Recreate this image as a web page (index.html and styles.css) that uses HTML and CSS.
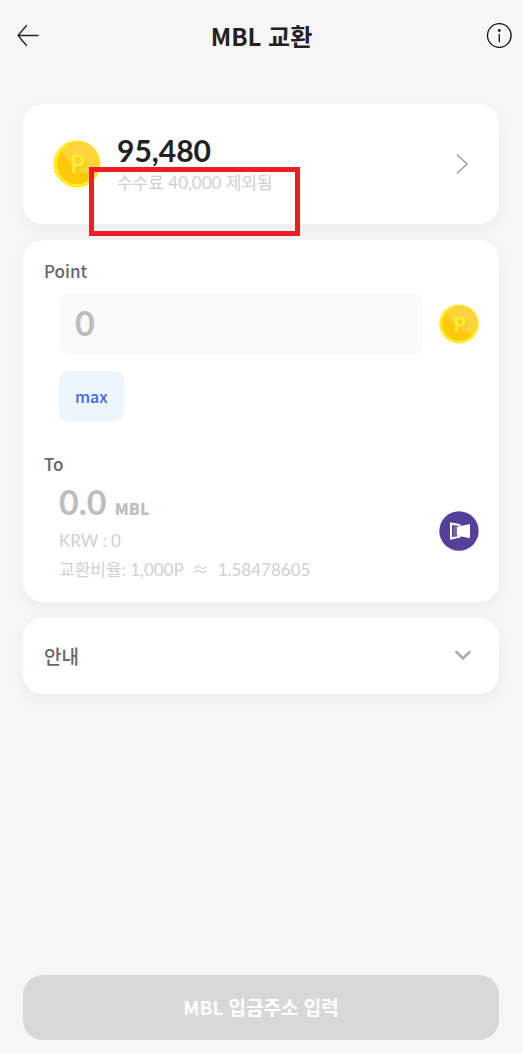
FILE: index.html
```html
<!DOCTYPE html>
<html lang="ko">
<head>
<meta charset="utf-8">
<meta name="viewport" content="width=device-width, initial-scale=1">
<title>MBL 교환</title>
<link rel="stylesheet" href="styles.css">
</head>
<body>
<div class="screen">
  <header class="bar">
    <button class="icon-button back" aria-label="뒤로">
      <svg width="24" height="24" viewBox="0 0 24 24" fill="none" stroke="#222" stroke-width="1.3" stroke-linecap="round" stroke-linejoin="round"><path d="M22 11.500H2M10.500 1.500L2 11.500l8.500 10"/></svg>
    </button>
    <h1 class="title">MBL 교환</h1>
    <button class="icon-button info" aria-label="정보">
      <svg width="26" height="26" viewBox="0 0 26 26" fill="none" stroke="#111" stroke-width="1.300" stroke-linecap="round"><circle cx="13.300" cy="12.500" r="11.800"/><path d="M13.300 11.500v7.200"/><circle cx="13.300" cy="7.500" r="1.400" fill="#111" stroke="none"/></svg>
    </button>
  </header>
  <main class="content">
    <section class="card balance">
      <svg class="coin-large" viewBox="0 0 48 48">
        <circle cx="24" cy="24" r="23.500" fill="#fbe21c"/>
        <circle cx="24" cy="24" r="22.500" fill="#fff02a"/>
        <circle cx="24" cy="24" r="20" fill="#ffc80a"/>
        <path d="M9 11A20 20 0 1 1 40 36Q19 31 9 11Z" fill="#ffd33a"/>
        <text x="25" y="33" class="coin-letter">P</text>
      </svg>
      <div class="balance-text">
        <strong class="amount">95,480</strong>
        <span class="note">수수료 40,000 제외됨</span>
      </div>
      <button class="icon-button" aria-label="상세">
        <svg width="14" height="22" viewBox="0 0 14 22" fill="none" stroke="#999" stroke-width="1.400"><path d="M2 1.500L12 11 2 20.500"/></svg>
      </button>
      <div class="highlight"></div>
    </section>
    <section class="card exchange">
      <label class="label" for="point">Point</label>
      <div class="row entry">
        <input id="point" class="point-input" type="text" inputmode="numeric" placeholder="0">
        <svg class="coin-small" viewBox="0 0 48 48">
          <circle cx="24" cy="24" r="23.500" fill="#fbe21c"/>
          <circle cx="24" cy="24" r="22.500" fill="#fff02a"/>
          <circle cx="24" cy="24" r="20" fill="#ffc80a"/>
          <path d="M9 11A20 20 0 1 1 40 36Q19 31 9 11Z" fill="#ffd33a"/>
          <text x="25" y="33" class="coin-letter">P</text>
        </svg>
      </div>
      <button class="max">max</button>
      <h2 class="label to">To</h2>
      <div class="row output">
        <div class="result">
          <p class="value">0.0 <span class="unit">MBL</span></p>
          <p class="note">KRW : 0</p>
          <p class="note">교환비율: 1,000P &nbsp;<span class="approx">≈</span>&nbsp; 1.58478605</p>
        </div>
        <svg class="token" viewBox="0 0 40 40"><circle cx="20" cy="20" r="19.700" fill="#563f98"/><path d="M11 11.300L21.500 13.300V15L13 14V26L21.500 24.800V26.600L11 28.700Z" fill="#fff"/><path d="M14.300 15L17.400 15.600V24.300L14.300 25Z" fill="#b9addb" fill-opacity=".35"/><path d="M17.800 15.800L31 13V27.200L17.800 24.500Z" fill="#fff"/></svg>
      </div>
    </section>
    <section class="card">
      <button class="guide">안내
        <svg width="16" height="11" viewBox="0 0 16 11" fill="none" stroke="#aaa" stroke-width="2.600" stroke-linecap="round"><path d="M1.500 2L8 8.500 14.500 2"/></svg>
      </button>
    </section>
  </main>
  <footer class="footer"><button class="submit" disabled>MBL 입금주소 입력</button></footer>
</div>
</body>
</html>
```
FILE: styles.css
```css
* { box-sizing: border-box; }
body {
  margin: 0;
  background: #f6f6f6;
  color: #222;
  font-family: "Noto Sans CJK KR", sans-serif;
}
h1, h2, p { margin: 0; }
button {
  border: 0;
  background: none;
  padding: 0;
  font-family: inherit;
}
svg { flex: none; display: block; }
.screen {
  min-height: 100vh;
  display: flex;
  flex-direction: column;
}
.bar {
  display: grid;
  grid-template-columns: 1fr auto 1fr;
  align-items: center;
  height: 72px;
  padding: 0 11px;
}
.back { justify-self: start; padding-left: 5px; }
.info { justify-self: end; }
.title { font-size: 24px; line-height: 36px; font-weight: 700; }
.content {
  display: flex;
  flex-direction: column;
  gap: 16px;
  padding: 32px 24px 0 23px;
}
.card {
  background: #fff;
  border-radius: 20px;
  box-shadow: 0 6px 18px rgba(0, 0, 0, 0.04);
}
.balance {
  position: relative;
  display: flex;
  align-items: center;
  gap: 16px;
  min-height: 120px;
  padding: 0 30px;
}
.coin-large { width: 48px; height: 48px; }
.coin-small, .token { width: 40px; height: 40px; }
.coin-letter {
  font: 700 24px "Noto Sans CJK KR", sans-serif;
  text-anchor: middle;
  fill: #ffec35;
  filter: drop-shadow(1px 1px 0 #f0c414);
}
.balance-text {
  flex: 1;
  display: flex;
  flex-direction: column;
}
.amount { font: 700 30px/36px Lato, sans-serif; }
.note {
  font: 400 17px/29px Lato, "Noto Sans CJK KR", sans-serif;
  color: #d0d0d0;
}
.approx { font-family: "Noto Sans CJK KR", sans-serif; line-height: 1; }
.highlight {
  position: absolute;
  left: 66px;
  top: 63px;
  width: 211px;
  height: 69px;
  border: 5px solid #ee1c25;
}
.exchange { padding: 19px 20px 18px 21px; }
.label {
  display: block;
  font-size: 17px;
  line-height: 24px;
  font-weight: 500;
  color: #666;
}
.row {
  display: flex;
  align-items: center;
  gap: 16px;
  padding-left: 15px;
}
.entry { margin-top: 10px; }
.output { margin-top: 2px; }
.point-input {
  flex: 1;
  min-width: 0;
  height: 62px;
  padding: 0 16px 4px;
  border: 0;
  border-radius: 10px;
  background: #fafafa;
  font: 700 34px/40px Lato, sans-serif;
  color: #222;
}
.point-input::placeholder { color: #bdbdbd; opacity: 1; }
.max {
  display: block;
  margin: 16px 0 0 15px;
  padding: 0 16px 2px;
  height: 51px;
  border-radius: 10px;
  background: #edf5fd;
  color: #4166e8;
  font-size: 16px;
  font-weight: 500;
}
.to { margin-top: 30px; }
.result { flex: 1; }
.value {
  font: 700 34px/48px Lato, sans-serif;
  color: #bdbdbd;
}
.unit { font: 900 16px/24px "Noto Sans CJK KR", sans-serif; }
.guide {
  display: flex;
  align-items: center;
  justify-content: space-between;
  width: 100%;
  height: 76px;
  padding: 0 28px 2px 21px;
  font-size: 19px;
  font-weight: 500;
  color: #666;
}
.footer {
  margin-top: auto;
  padding: 0 24px 13px 23px;
}
.submit {
  width: 100%;
  height: 65px;
  padding-bottom: 2px;
  border-radius: 20px;
  background: #d8d8d8;
  color: #fff;
  font-size: 19px;
  font-weight: 700;
}
```
